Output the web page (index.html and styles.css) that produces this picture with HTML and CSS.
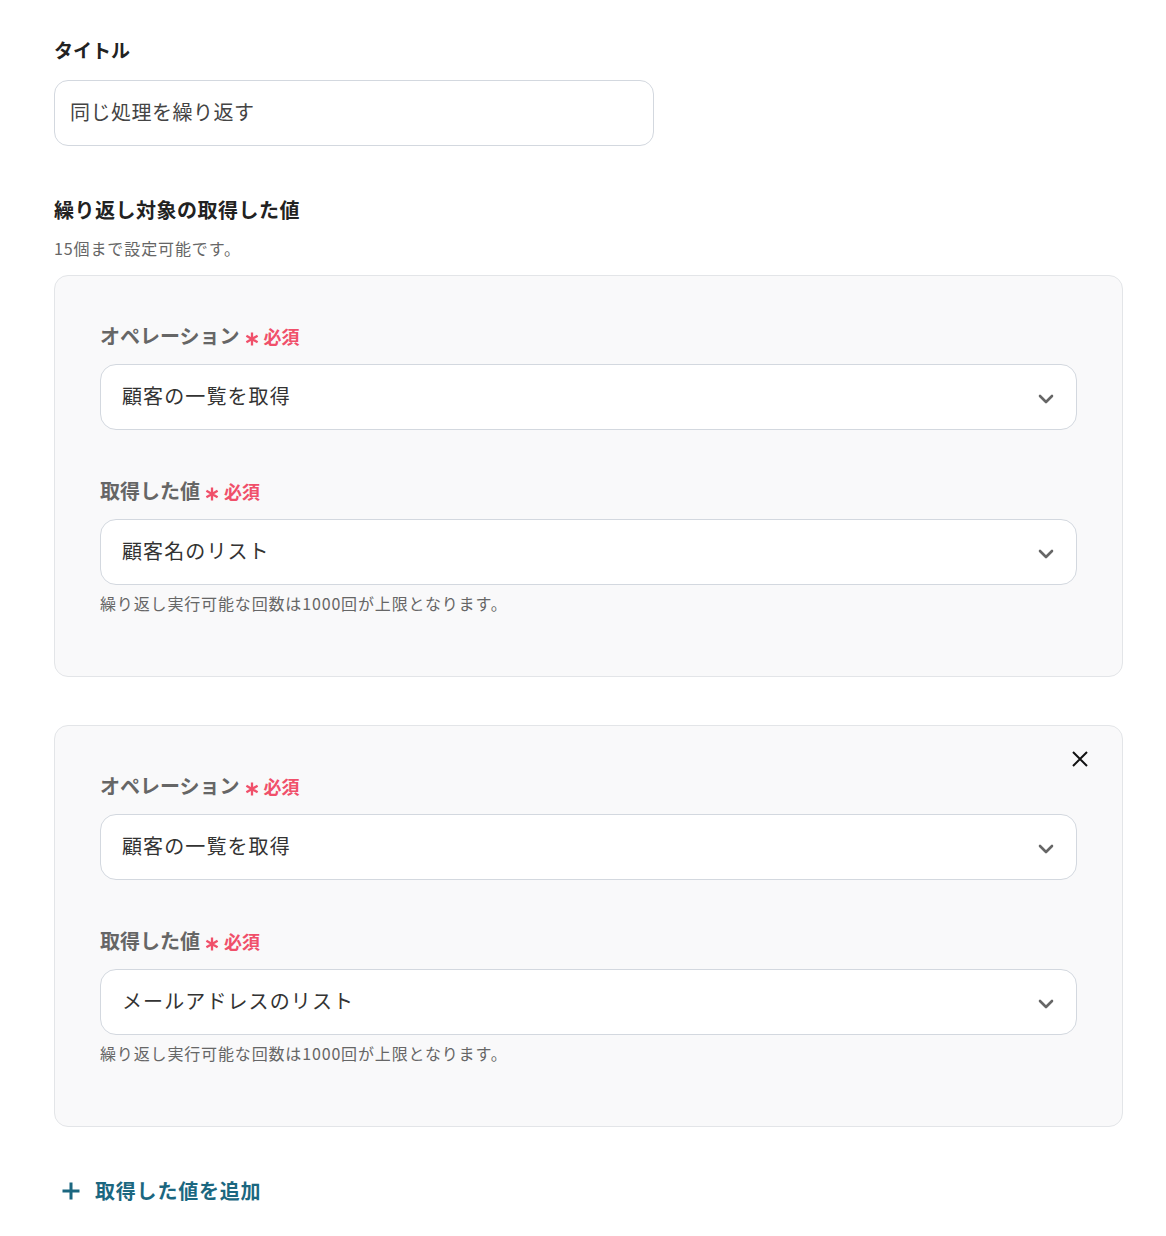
FILE: index.html
```html
<!DOCTYPE html>
<html lang="ja">
<head>
<meta charset="utf-8">
<link rel="stylesheet" href="styles.css">
</head>
<body>
<div class="page">
  <div class="field">
    <div class="title-label">タイトル</div>
    <div class="text-input">同じ処理を繰り返す</div>
  </div>

  <div class="section">
    <div class="section-title">繰り返し対象の取得した値</div>
    <div class="section-note">15個まで設定可能です。</div>

    <div class="card">
      <div class="card-field">
        <div class="label">オペレーション<span class="req"><svg class="ast" width="14" height="14" viewBox="0 0 14 14"><path d="M7 0.5v13M1.4 3.75l11.2 6.5M12.6 3.75L1.4 10.25" stroke="#f0506a" stroke-width="2.3"/></svg>必須</span></div>
        <div class="select"><span>顧客の一覧を取得</span>
          <svg class="chev" width="16" height="10" viewBox="0 0 16 10"><path d="M2 2l6 6 6-6" fill="none" stroke="#666" stroke-width="2.6" stroke-linecap="round" stroke-linejoin="round"/></svg>
        </div>
      </div>
      <div class="card-field">
        <div class="label">取得した値<span class="req"><svg class="ast" width="14" height="14" viewBox="0 0 14 14"><path d="M7 0.5v13M1.4 3.75l11.2 6.5M12.6 3.75L1.4 10.25" stroke="#f0506a" stroke-width="2.3"/></svg>必須</span></div>
        <div class="select"><span>顧客名のリスト</span>
          <svg class="chev" width="16" height="10" viewBox="0 0 16 10"><path d="M2 2l6 6 6-6" fill="none" stroke="#666" stroke-width="2.6" stroke-linecap="round" stroke-linejoin="round"/></svg>
        </div>
        <div class="hint">繰り返し実行可能な回数は1000回が上限となります。</div>
      </div>
    </div>

    <div class="card">
      <svg class="close" width="18" height="18" viewBox="0 0 18 18"><path d="M2 2l14 14M16 2L2 16" fill="none" stroke="#111" stroke-width="2"/></svg>
      <div class="card-field">
        <div class="label">オペレーション<span class="req"><svg class="ast" width="14" height="14" viewBox="0 0 14 14"><path d="M7 0.5v13M1.4 3.75l11.2 6.5M12.6 3.75L1.4 10.25" stroke="#f0506a" stroke-width="2.3"/></svg>必須</span></div>
        <div class="select"><span>顧客の一覧を取得</span>
          <svg class="chev" width="16" height="10" viewBox="0 0 16 10"><path d="M2 2l6 6 6-6" fill="none" stroke="#666" stroke-width="2.6" stroke-linecap="round" stroke-linejoin="round"/></svg>
        </div>
      </div>
      <div class="card-field">
        <div class="label">取得した値<span class="req"><svg class="ast" width="14" height="14" viewBox="0 0 14 14"><path d="M7 0.5v13M1.4 3.75l11.2 6.5M12.6 3.75L1.4 10.25" stroke="#f0506a" stroke-width="2.3"/></svg>必須</span></div>
        <div class="select"><span>メールアドレスのリスト</span>
          <svg class="chev" width="16" height="10" viewBox="0 0 16 10"><path d="M2 2l6 6 6-6" fill="none" stroke="#666" stroke-width="2.6" stroke-linecap="round" stroke-linejoin="round"/></svg>
        </div>
        <div class="hint">繰り返し実行可能な回数は1000回が上限となります。</div>
      </div>
    </div>

    <div class="add">
      <svg width="20" height="20" viewBox="0 0 20 20"><path d="M10 1.5v17M1.5 10h17" fill="none" stroke="#1b6780" stroke-width="3"/></svg>
      <span>取得した値を追加</span>
    </div>
  </div>
</div>
</body>
</html>
```

FILE: styles.css
```css
* { box-sizing: border-box; }
html, body { margin: 0; padding: 0; background: #fff; }
body {
  font-family: "Noto Sans CJK JP", "Noto Sans", sans-serif;
  color: #222;
}
.page {
  width: 1069px;
  margin-left: 54px;
  padding-top: 37px;
}
.title-label {
  font-size: 19px;
  font-weight: 700;
  line-height: 26px;
  color: #222;
}
.text-input {
  margin-top: 17px;
  width: 600px;
  height: 66px;
  border: 1px solid #d3d8df;
  border-radius: 14px;
  padding: 0 15px 4px;
  display: flex;
  align-items: center;
  font-size: 20px;
  letter-spacing: 0.5px;
  color: #444;
}
.section { margin-top: 50px; }
.section-title {
  font-size: 20px;
  font-weight: 700;
  line-height: 28px;
  letter-spacing: 0.5px;
  color: #222;
}
.section-note {
  margin-top: 14px;
  font-size: 16px;
  line-height: 20px;
  letter-spacing: 0.9px;
  color: #666;
}
.card {
  position: relative;
  margin-top: 17px;
  background: #f9f9fa;
  border: 1px solid #e3e5e8;
  border-radius: 14px;
  padding: 47px 45px 63px;
  display: flex;
  flex-direction: column;
  gap: 48px;
}
.card + .card { margin-top: 48px; }
.card-field { display: flex; flex-direction: column; }
.label {
  font-size: 20px;
  font-weight: 700;
  line-height: 26px;
  color: #666;
  letter-spacing: 0;
  display: flex;
  align-items: center;
}
.req {
  margin-left: 5px;
  color: #f0506a;
  font-size: 18px;
  font-weight: 700;
  letter-spacing: 0;
  display: inline-flex;
  align-items: center;
}
.ast {
  display: block;
  margin-right: 5px;
  position: relative;
  top: 3px;
}
.select {
  margin-top: 15px;
  height: 66px;
  background: #fff;
  border: 1px solid #d3d8df;
  border-radius: 16px;
  padding: 0 22px 3px 21px;
  display: flex;
  align-items: center;
  justify-content: space-between;
  font-size: 20px;
  letter-spacing: 1.1px;
  color: #333;
}
.chev { display: block; position: relative; top: 3px; }
.hint {
  margin-top: 8px;
  font-size: 16px;
  line-height: 20px;
  letter-spacing: 0.85px;
  color: #666;
}
.close {
  position: absolute;
  top: 24px;
  right: 33px;
}
.add {
  margin-top: 50px;
  display: flex;
  align-items: center;
  gap: 14px;
  padding-left: 7px;
  color: #1b6780;
  font-size: 20px;
  font-weight: 700;
  line-height: 28px;
  letter-spacing: 0.8px;
}
.add svg { display: block; }
```
